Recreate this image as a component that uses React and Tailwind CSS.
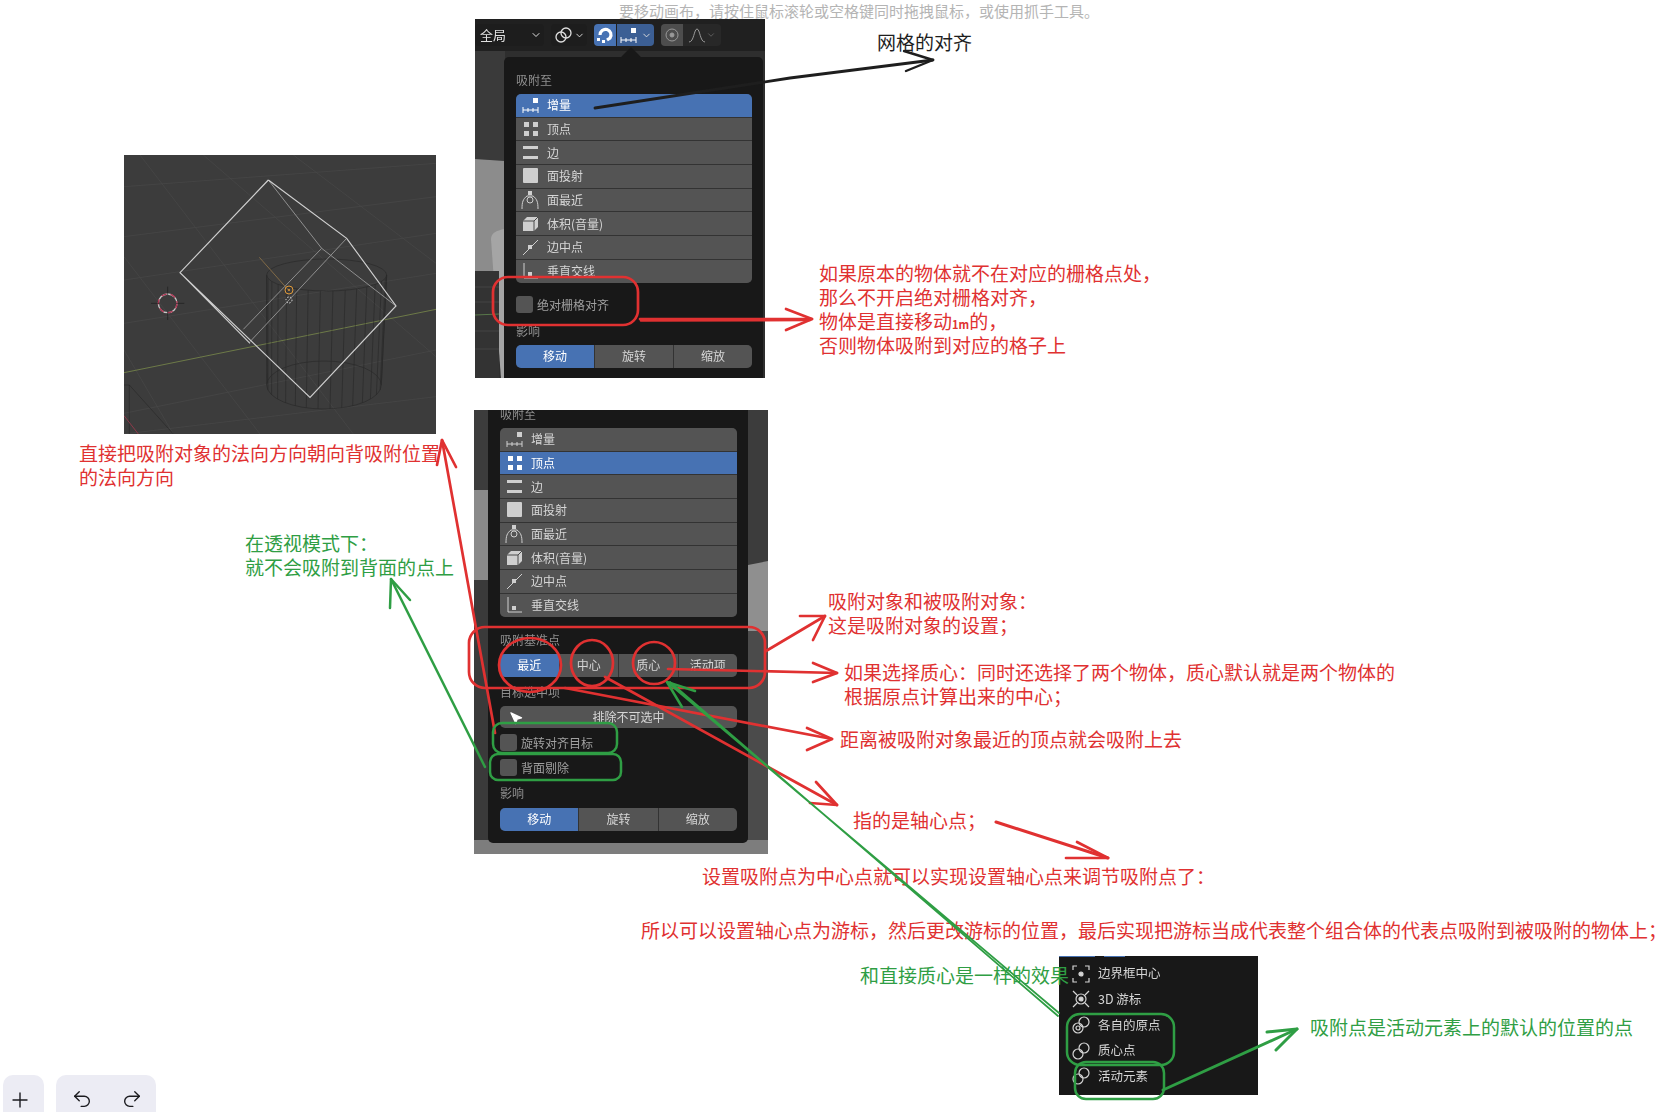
import React from "react";
import { Plus, Undo2, Redo2, ChevronDown, Navigation2 } from "lucide-react";

const FONT = "[font-family:'Noto_Sans_CJK_SC','Noto_Sans',sans-serif]";

function SnapIcon({ name, active }) {
  const c = active ? "#ffffff" : "#cfcfcf";
  const common = { width: 20, height: 20, viewBox: "0 0 20 20", fill: "none", stroke: c, strokeWidth: 1 };
  if (name === "inc") return <svg {...common}><path d="M2 15h15M2 12v6M7 13v4M12 13v4M17 12v6" /><rect x="12" y="3" width="5" height="5" fill={c} stroke="none" /></svg>;
  if (name === "vert") return <svg {...common}><g fill={c} stroke="none"><rect x="3" y="3" width="5" height="5" /><rect x="12" y="3" width="5" height="5" /><rect x="3" y="12" width="5" height="5" /><rect x="12" y="12" width="5" height="5" /></g></svg>;
  if (name === "edge") return <svg {...common}><g fill={c} stroke="none"><rect x="2" y="3" width="15" height="3" /><rect x="2" y="13" width="15" height="3" /></g></svg>;
  if (name === "face") return <svg {...common}><rect x="2" y="2" width="15" height="15" rx="1" fill={c} stroke="none" /></svg>;
  if (name === "near") return <svg {...common}><path d="M1 19c0-7 1-10 5-13h6c4 3 5 6 5 13" /><circle cx="9" cy="10" r="3" /><rect x="7" y="1" width="4" height="4" fill={c} stroke="none" /></svg>;
  if (name === "vol") return <svg {...common}><path d="M2 7l4-4h11v10l-4 4H2z" fill={c} stroke="none" /><path d="M2 7h11v10M13 7l4-4" stroke="#4a4a4a" /></svg>;
  if (name === "mid") return <svg {...common}><path d="M2 18L17 3" /><rect x="7" y="8" width="4" height="4" fill={c} stroke="none" /></svg>;
  return <svg {...common}><path d="M3 2v15h14" /><rect x="7" y="11" width="4" height="4" fill={c} stroke="none" /></svg>;
}

const ROWS = [
  ["inc", "增量"], ["vert", "顶点"], ["edge", "边"], ["face", "面投射"],
  ["near", "面最近"], ["vol", "体积(音量)"], ["mid", "边中点"], ["perp", "垂直交线"],
];

function SnapList({ active }) {
  return (
    <div className="flex flex-col gap-px overflow-hidden rounded-[5px] bg-[#333333]">
      {ROWS.map(([icon, label]) => (
        <div key={icon} className={`flex h-[22.7px] items-center gap-[6px] pl-[5px] text-[12px] ${icon === active ? "bg-[#4772b3] text-white" : "bg-[#545454] text-[#d6d6d6]"}`}>
          <SnapIcon name={icon} active={icon === active} />
          <span>{label}</span>
        </div>
      ))}
    </div>
  );
}

function Segments({ items, height = "h-[23px]" }) {
  return (
    <div className={`flex ${height} gap-px overflow-hidden rounded-[5px] bg-[#333333] text-[12px] text-[#d6d6d6]`}>
      {items.map((t, i) => (
        <div key={t} className={`flex flex-1 items-center justify-center ${i === 0 ? "bg-[#4772b3] text-white" : "bg-[#545454]"}`}>{t}</div>
      ))}
    </div>
  );
}

function Check({ label }) {
  return (
    <div className="flex h-[18px] items-center gap-[4px] text-[12px] text-[#a0a0a0]">
      <div className="h-[17px] w-[17px] rounded-[3px] bg-[#545454]" />
      <span>{label}</span>
    </div>
  );
}

function Label({ children, className = "" }) {
  return <div className={`text-[12px] leading-[16px] text-[#8f8f8f] ${className}`}>{children}</div>;
}

function Backdrop1() {
  return (
    <svg className="absolute inset-0" width="290" height="359" viewBox="0 0 290 359">
      <rect width="290" height="359" fill="#2e2e2e" />
      <rect y="0" width="290" height="32" fill="#202020" />
      <path d="M0 32h30v110L0 140z" fill="#3a3a3a" />
      <path d="M0 140l30 2v130H0z" fill="#8c8c8c" />
      <path d="M16 220q0-8 14-10v150H26z" fill="#a5a5a5" />
      <path d="M0 252h24v107H0z" fill="#333333" />
      <path d="M0 296L24 295" stroke="#58784a" />
      <path d="M0 268h24M0 283h24M0 312h24M0 330h24" stroke="#444444" />
    </svg>
  );
}

function Panel1() {
  return (
    <div className={`absolute left-[475px] top-[19px] h-[359px] w-[290px] overflow-hidden blur-[0.5px] ${FONT}`}>
      <Backdrop1 />
      <div className="relative flex h-[38px] items-start gap-[7px] pt-[5px] text-[13px] text-[#e0e0e0]">
        <div className="flex h-[22px] w-[69px] items-center justify-between rounded-[4px] bg-[#1d1d1d] pl-[5px] pr-[2px]">
          <span>全局</span><ChevronDown size={12} />
        </div>
        <div className="flex h-[22px] w-[36px] items-center justify-center rounded-[4px] bg-[#1d1d1d]">
          <svg width="20" height="18" viewBox="0 0 20 18" fill="none" stroke="#e0e0e0" strokeWidth="1.3"><circle cx="7" cy="11" r="5" /><circle cx="12" cy="7" r="5" /></svg>
          <ChevronDown size={11} />
        </div>
        <div className="flex h-[22px] w-[60px] overflow-hidden rounded-[4px]">
          <div className="flex w-[22px] items-center justify-center bg-[#4772b3]">
            <svg width="20" height="20" viewBox="0 0 20 20" fill="none" stroke="#fff" strokeWidth="3.2"><path d="M5 10a5.5 5.5 0 1 1 10 3l-3 2" /><rect x="2" y="13" width="3" height="3" fill="#fff" stroke="none" /><rect x="7" y="15" width="3" height="3" fill="#fff" stroke="none" /></svg>
          </div>
          <div className="ml-px flex flex-1 items-center justify-center gap-[2px] bg-[#3c5f94]">
            <SnapIcon name="inc" active /><ChevronDown size={11} />
          </div>
        </div>
        <div className="flex h-[22px] w-[60px] overflow-hidden rounded-[4px] bg-[#282828]">
          <div className="flex w-[22px] items-center justify-center bg-[#4d4d4d]">
            <svg width="16" height="16" viewBox="0 0 16 16" fill="none" stroke="#999"><circle cx="8" cy="8" r="6" /><circle cx="8" cy="8" r="2" fill="#999" /></svg>
          </div>
          <div className="flex flex-1 items-center justify-center text-[#666]">
            <svg width="18" height="16" viewBox="0 0 18 16" fill="none" stroke="#999"><path d="M1 15C6 15 6 2 9 2s3 13 8 13" /></svg>
            <ChevronDown size={10} />
          </div>
        </div>
      </div>
      <div className="absolute left-[29px] top-[31px] h-[328px] w-[259px]">
        <div className="absolute left-[120px] top-0 h-[14px] w-[14px] rotate-45 bg-[#181818]" />
        <div className="absolute inset-x-0 bottom-0 top-[7px] rounded-t-[5px] bg-[#181818] pl-[12px] pr-[11px] pt-[15px]">
          <Label className="mb-[6px]">吸附至</Label>
          <SnapList active="inc" />
          <div className="mt-[13px]"><Check label="绝对栅格对齐" /></div>
          <Label className="mt-[9px]">影响</Label>
          <div className="mt-[6px]"><Segments items={["移动", "旋转", "缩放"]} /></div>
        </div>
      </div>
    </div>
  );
}

function Panel2() {
  return (
    <div className={`absolute left-[474px] top-[410px] h-[444px] w-[294px] overflow-hidden blur-[0.5px] ${FONT}`}>
      <svg className="absolute inset-0" width="294" height="444" viewBox="0 0 294 444">
        <rect width="294" height="444" fill="#3c3c3c" />
        <path d="M0 80h14v90H0z" fill="#8a8a8a" />
        <path d="M274 155l20-4v70h-20z" fill="#8f8f8f" />
        <path d="M274 221h20v223h-20z" fill="#4b4b4b" />
        <path d="M0 430h294v14H0z" fill="#7d7d7d" />
        <path d="M0 170h14v260H0z" fill="#3a3a3a" />
      </svg>
      <div className="absolute bottom-[11px] left-[14px] right-[20px] top-0 rounded-b-[5px] bg-[#181818] pl-[12px] pr-[11px] text-[#8f8f8f]">
        <div className="-mt-[4px] h-[22px]"><Label>吸附至</Label></div>
        <SnapList active="vert" />
        <Label className="mt-[15px]">吸附基准点</Label>
        <div className="mt-[6px]"><Segments items={["最近", "中心", "质心", "活动项"]} /></div>
        <Label className="mt-[7px]">目标选中项</Label>
        <div className="relative mt-[6px] flex h-[22px] items-center justify-center rounded-[5px] bg-[#545454] pl-[20px] text-[12px] text-[#d6d6d6]">
          <Navigation2 size={14} fill="#fff" stroke="#fff" className="absolute left-[8px] -rotate-45" />
          排除不可选中
        </div>
        <div className="mt-[6px] flex flex-col gap-[7px]">
          <Check label="旋转对齐目标" />
          <Check label="背面剔除" />
        </div>
        <Label className="mt-[8px]">影响</Label>
        <div className="mt-[7px]"><Segments items={["移动", "旋转", "缩放"]} /></div>
      </div>
    </div>
  );
}

function PivotIcon({ name }) {
  const p = { width: 20, height: 20, viewBox: "0 0 20 20", fill: "none", stroke: "#d5d5d5", strokeWidth: 1.2 };
  if (name === "box") return <svg {...p}><path d="M2 6V2h4M14 2h4v4M18 14v4h-4M6 18H2v-4" /><circle cx="10" cy="10" r="2" fill="#d5d5d5" /></svg>;
  if (name === "cursor") return <svg {...p}><circle cx="10" cy="10" r="5" /><circle cx="10" cy="10" r="2" fill="#d5d5d5" /><path d="M2 2l4 4M18 2l-4 4M2 18l4-4M18 18l-4-4" /></svg>;
  return <svg {...p}><circle cx="7" cy="13" r="5" /><circle cx="13" cy="7" r="5" />{name === "each" && <circle cx="7" cy="13" r="2" />}</svg>;
}

function Panel3() {
  const rows = [["box", "边界框中心"], ["cursor", "3D 游标"], ["each", "各自的原点"], ["med", "质心点"], ["act", "活动元素"]];
  return (
    <div className={`absolute left-[1059px] top-[956px] flex h-[139px] w-[199px] flex-col bg-[#181818] pl-[12px] pt-[5px] blur-[0.4px] ${FONT}`}>
      <div className="absolute left-0 top-0 h-px w-[36px] bg-[#4772b3]" />
      <div className="absolute left-[45px] top-0 h-px w-[21px] bg-[#4772b3]" />
      {rows.map(([i, t]) => (
        <div key={i} className="flex h-[25.6px] items-center gap-[7px] text-[12.5px] text-[#d5d5d5]">
          <PivotIcon name={i} /><span>{t}</span>
        </div>
      ))}
    </div>
  );
}

function Viewport() {
  const top = (t) => [620 + 180 * Math.cos(t), 375 + 48 * Math.sin(t)];
  const bot = (t) => [612 + 172 * Math.cos(t), 705 + 72 * Math.sin(t)];
  const ts = Array.from({ length: 16 }, (_, i) => (Math.PI * i) / 15);
  return (
    <svg className="absolute left-[124px] top-[155px] blur-[0.4px]" width="312" height="279" viewBox="12 15 936 837">
      <rect x="12" y="15" width="936" height="837" fill="#3c3c3c" />
      <g stroke="#484848" strokeWidth="2" fill="none">
        <path d="M12 110L948 40M12 260L948 140M12 390L948 250M12 520L948 370M12 790L948 600M12 852L948 740" />
        <path d="M60 15L700 852M250 15L948 620M520 15L948 340M12 320L420 852M12 600L160 852" />
      </g>
      <path d="M12 668L948 478" stroke="#6d7a48" strokeWidth="3" />
      <g fill="none" stroke="#1d1d1d" strokeWidth="2" opacity="0.6">
        <ellipse cx="620" cy="375" rx="180" ry="48" />
        <ellipse cx="612" cy="705" rx="172" ry="72" />
        {ts.map((t, i) => {
          const a = top(t); const b = bot(t);
          return <line key={i} x1={a[0]} y1={a[1]} x2={b[0]} y2={b[1]} />;
        })}
        <path d="M440 375L442 700M800 375L784 700" />
        <path d="M12 705H28L160 852M28 705V852" />
      </g>
      <path d="M12 797L55 852" stroke="#8c3a4a" strokeWidth="3" />
      <g fill="none" stroke="#8f8f8f" strokeWidth="3">
        <path d="M445 90L605 295L370 538M605 295L828 468M680 265L390 575" />
      </g>
      <path d="M445 90L180 368L570 742L828 468L680 265L445 90M180 368L390 580" fill="none" stroke="#cfcfcf" strokeWidth="3.5" />
      <path d="M418 322L505 420" stroke="#8f7448" strokeWidth="2.5" />
      <circle cx="507" cy="420" r="12" fill="none" stroke="#e09a3a" strokeWidth="3" />
      <circle cx="507" cy="420" r="3" fill="#e09a3a" />
      <circle cx="507" cy="450" r="9" fill="none" stroke="#e8e8e8" strokeWidth="3" strokeDasharray="4 5" />
      <circle cx="143" cy="460" r="28" fill="none" stroke="#c9c9c9" strokeWidth="4" />
      <circle cx="143" cy="460" r="28" fill="none" stroke="#b03050" strokeWidth="4" strokeDasharray="16 12" />
      <path d="M143 410v25M143 485v25M93 460h25M168 460h25" stroke="#1c1c1c" strokeWidth="2" />
    </svg>
  );
}

function Annotations() {
  const red = { fill: "none", stroke: "#e03131", strokeWidth: 2.7, strokeLinecap: "round", strokeLinejoin: "round" };
  const green = { fill: "none", stroke: "#2f9e44", strokeWidth: 2.5, strokeLinecap: "round", strokeLinejoin: "round" };
  return (
    <svg className="pointer-events-none absolute inset-0" width="1672" height="1112" viewBox="0 0 1672 1112">
      <g fill="none" stroke="#1e1e1e" strokeWidth="2.4" strokeLinecap="round" strokeLinejoin="round">
        <path d="M595 108L790 78L933 60" strokeWidth="2.8" />
        <path d="M904 51L933 60L906 71" />
      </g>
      <g {...red}>
        <rect x="493" y="277" width="145" height="48" rx="15" />
        <path d="M640 319L812 319M641 320.5L810 320" />
        <path d="M786 309L812 319L786 330" />
        <rect x="469" y="627" width="296" height="61" rx="16" />
        <ellipse cx="530" cy="665" rx="31" ry="27" />
        <ellipse cx="592" cy="663" rx="21" ry="23" />
        <ellipse cx="654" cy="663" rx="21" ry="21" />
        <path d="M766 651L825 616" />
        <path d="M800 616L825 616L813 640" />
        <path d="M668 669L837 673" />
        <path d="M813 663L837 673L813 682" />
        <path d="M565 688L832 739" />
        <path d="M807 728L832 739L807 750" />
        <path d="M605 677L837 805" />
        <path d="M816 782L837 805L810 803" />
        <path d="M495 733L442 440" />
        <path d="M437 465L442 440L456 467" />
        <path d="M996 822L1108 858" strokeWidth="3" />
        <path d="M1077 842L1108 858L1066 858" />
      </g>
      <g {...green}>
        <rect x="493" y="723" width="124" height="30" rx="9" />
        <rect x="490" y="754" width="131" height="26" rx="8" />
        <path d="M485 767L391 579" />
        <path d="M390 608L391 579L410 600" />
        <path d="M667 682L1059 1013M670 682L1058 1016" strokeWidth="1.8" />
        <path d="M695 691L667 682L682 707" />
        <rect x="1067" y="1014" width="107" height="51" rx="13" />
        <rect x="1075" y="1062" width="89" height="37" rx="11" />
        <path d="M1163 1090L1297 1029" strokeWidth="3" />
        <path d="M1267 1032L1297 1029L1276 1050" strokeWidth="3" />
      </g>
    </svg>
  );
}

function Toolbar() {
  const cls = "flex h-[37px] items-center rounded-t-[10px] bg-[#ececf4] text-[#1b1b1f]";
  return (
    <div className="absolute bottom-0 left-[3px] flex gap-[12px]">
      <div className={`${cls} w-[41px] pl-[5px] pt-[12px]`}><Plus size={24} strokeWidth={1.4} /></div>
      <div className={`${cls} w-[100px] gap-[28px] pl-[15px] pt-[11px]`}>
        <Undo2 size={22} strokeWidth={1.5} />
        <Redo2 size={22} strokeWidth={1.5} />
      </div>
    </div>
  );
}

export default function App() {
  const red = "absolute text-[19px] leading-[24px] whitespace-nowrap text-[#e03131]";
  const green = "absolute text-[19px] leading-[24px] whitespace-nowrap text-[#2f9e44]";
  return (
    <div className={`relative h-[1112px] w-[1672px] overflow-hidden bg-white ${FONT}`}>
      <div className="absolute left-[619px] top-[1px] whitespace-nowrap text-[15px] leading-[20px] text-[#b4b4b4]">要移动画布，请按住鼠标滚轮或空格键同时拖拽鼠标，或使用抓手工具。</div>
      <Viewport />
      <Panel1 />
      <Panel2 />
      <Panel3 />

      <div className="absolute left-[877px] top-[30px] whitespace-nowrap text-[19px] leading-[24px] text-[#1e1e1e]">网格的对齐</div>

      <div className={`${red} left-[819px] top-[261px] leading-[23.7px]`}>
        <div>如果原本的物体就不在对应的栅格点处，</div>
        <div>那么不开启绝对栅格对齐，</div>
        <div className="h-[23.7px]">物体是直接移动<span className="text-[11px] font-bold leading-none">1m</span>的，</div>
        <div>否则物体吸附到对应的格子上</div>
      </div>
      <div className={`${red} left-[79px] top-[441px]`}>
        <div>直接把吸附对象的法向方向朝向背吸附位置</div>
        <div>的法向方向</div>
      </div>
      <div className={`${green} left-[245px] top-[531px]`}>
        <div>在透视模式下：</div>
        <div>就不会吸附到背面的点上</div>
      </div>
      <div className={`${red} left-[828px] top-[589px]`}>
        <div>吸附对象和被吸附对象：</div>
        <div>这是吸附对象的设置；</div>
      </div>
      <div className={`${red} left-[844px] top-[660px]`}>
        <div>如果选择质心：同时还选择了两个物体，质心默认就是两个物体的</div>
        <div>根据原点计算出来的中心；</div>
      </div>
      <div className={`${red} left-[840px] top-[727px]`}>距离被吸附对象最近的顶点就会吸附上去</div>
      <div className={`${red} left-[853px] top-[808px]`}>指的是轴心点；</div>
      <div className={`${red} left-[702px] top-[864px]`}>设置吸附点为中心点就可以实现设置轴心点来调节吸附点了：</div>
      <div className={`${red} left-[641px] top-[918px]`}>所以可以设置轴心点为游标，然后更改游标的位置，最后实现把游标当成代表整个组合体的代表点吸附到被吸附的物体上；</div>
      <div className={`${green} left-[860px] top-[963px]`}>和直接质心是一样的效果</div>
      <div className={`${green} left-[1310px] top-[1015px]`}>吸附点是活动元素上的默认的位置的点</div>

      <Annotations />
      <Toolbar />
    </div>
  );
}
